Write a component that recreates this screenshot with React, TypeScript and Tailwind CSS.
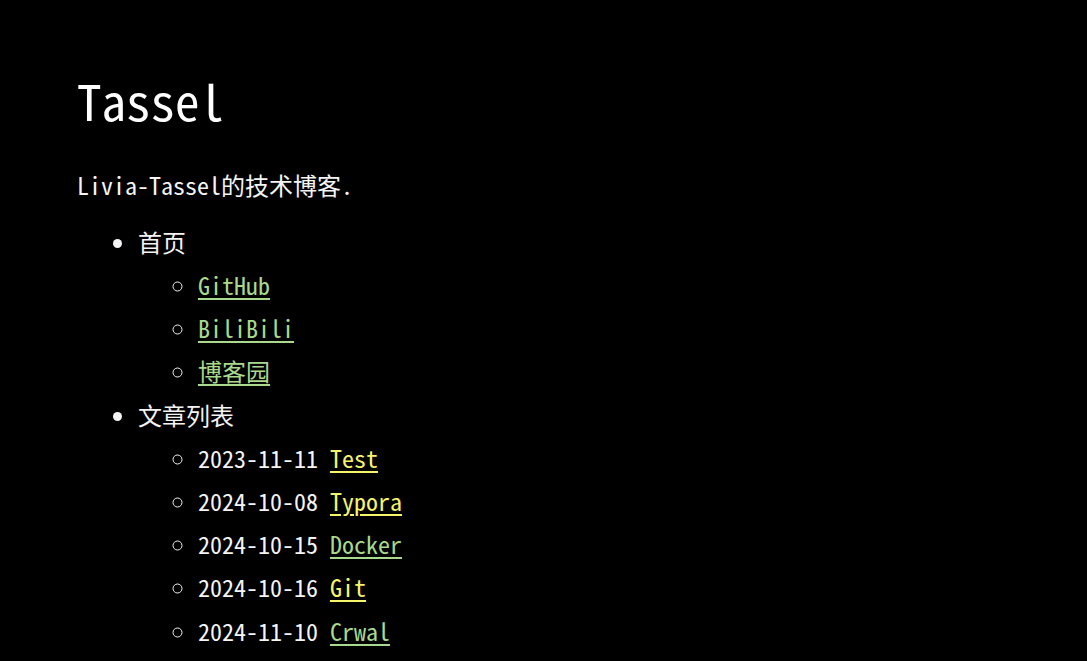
import React from "react";

const FONT = '"Noto Sans Mono CJK SC", "Liberation Mono", "Noto Sans CJK SC", monospace';

const links1 = [
  { t: "GitHub" },
  { t: "BiliBili" },
  { t: "博客园" },
];

const posts = [
  { d: "2023-11-11", t: "Test", c: "text-[#f5f56a] decoration-[#f5f56a]" },
  { d: "2024-10-08", t: "Typora", c: "text-[#f5f56a] decoration-[#f5f56a]" },
  { d: "2024-10-15", t: "Docker", c: "text-[#a8d98c] decoration-[#a8d98c]" },
  { d: "2024-10-16", t: "Git", c: "text-[#f5f56a] decoration-[#f5f56a]" },
  { d: "2024-11-10", t: "Crwal", c: "text-[#a8d98c] decoration-[#a8d98c]" },
];

export default function App() {
  return (
    <div className="min-h-[661px] bg-black text-[#f4f4f4] pl-[77px] pt-[71px]" style={{ fontFamily: FONT }}>
      <h1 className="text-[49px] leading-[57.6px] font-normal text-white">Tassel</h1>
      <p className="mt-[34px] text-[24px] leading-[43.2px]">Livia-Tassel的技术博客.</p>
      <ul className="mt-[14px] pl-[61px] list-disc text-[24px] leading-[43.2px]">
        <li>
          首页
          <ul className="pl-[60px] list-[circle]">
            {links1.map((l) => (
              <li key={l.t}>
                <a className="text-[#a8d98c] underline decoration-[#a8d98c] decoration-2 underline-offset-[3px]" href="#">
                  {l.t}
                </a>
              </li>
            ))}
          </ul>
        </li>
        <li>
          文章列表
          <ul className="pl-[60px] list-[circle]">
            {posts.map((p) => (
              <li key={p.d}>
                {p.d}{" "}
                <a className={`underline decoration-2 underline-offset-[3px] ${p.c}`} href="#">
                  {p.t}
                </a>
              </li>
            ))}
          </ul>
        </li>
      </ul>
    </div>
  );
}
